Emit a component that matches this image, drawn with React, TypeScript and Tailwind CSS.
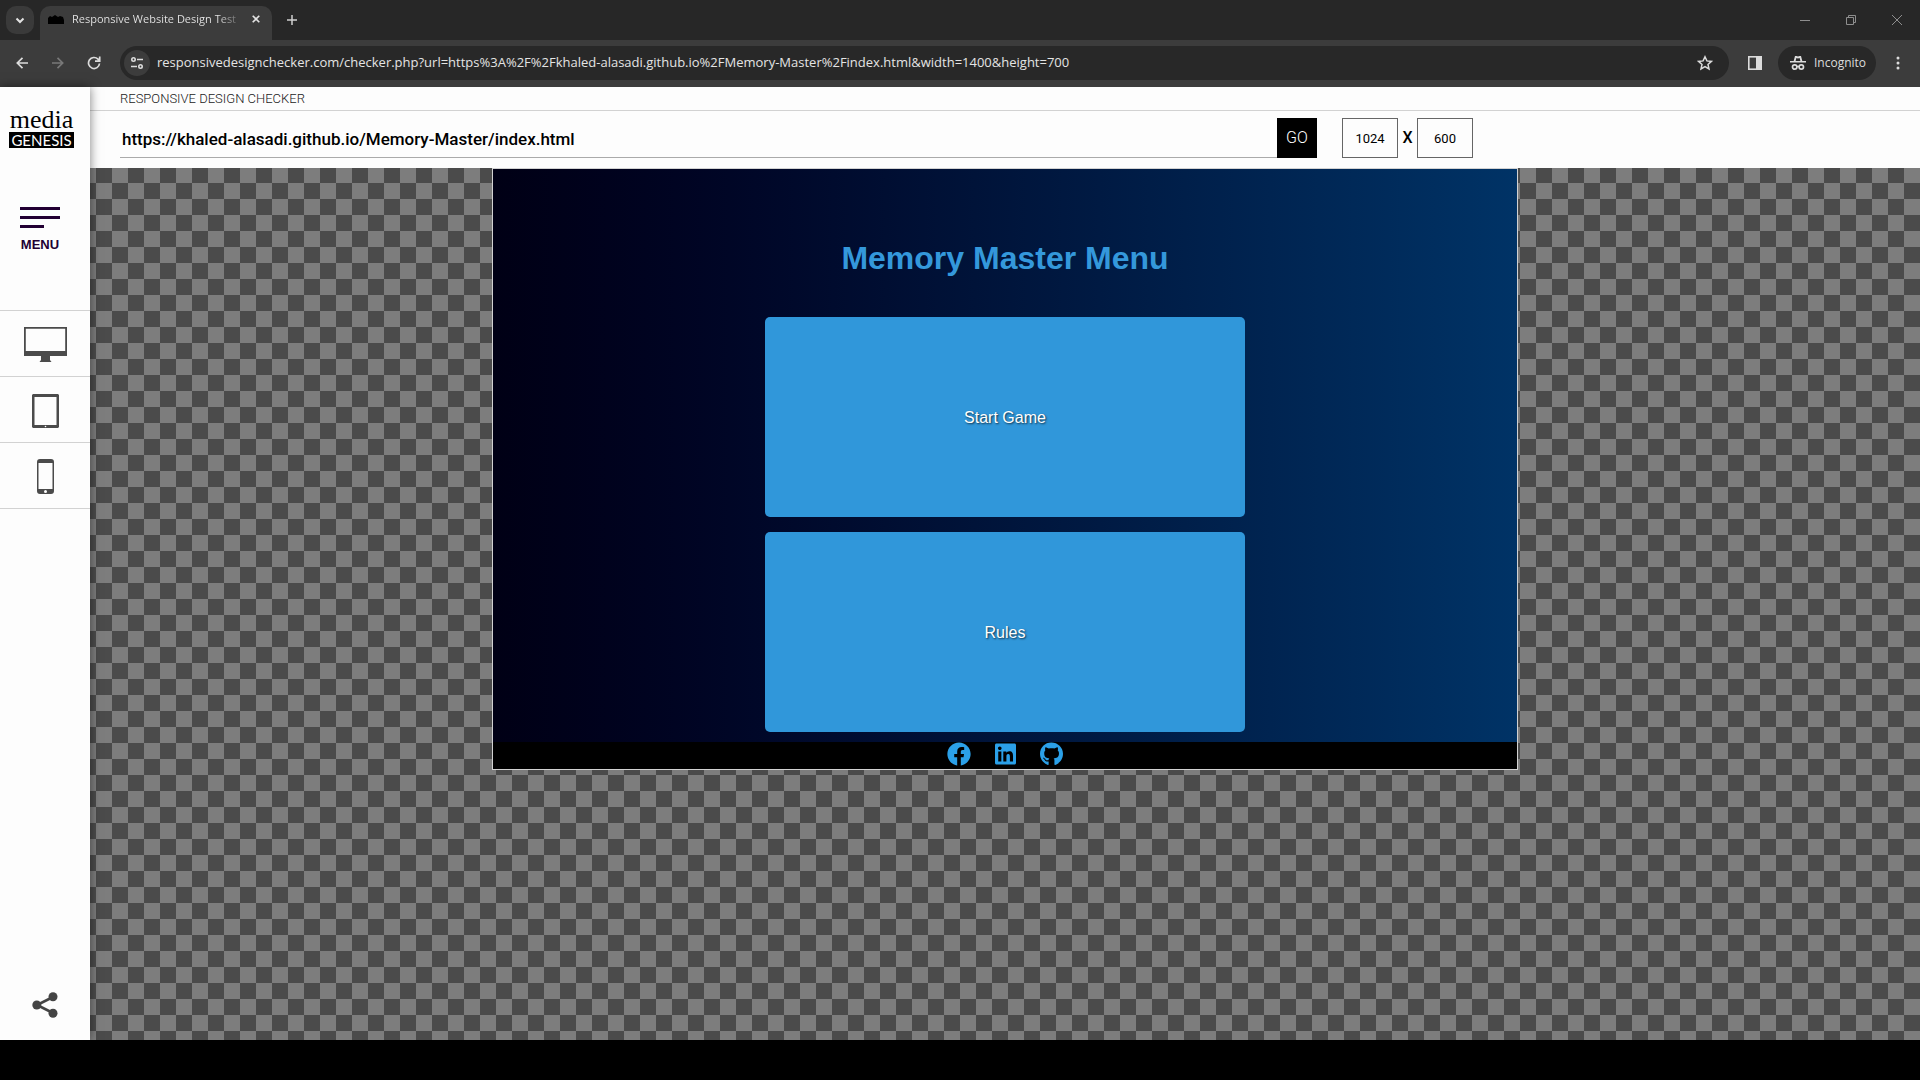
import React from "react";
import { FaFacebook, FaLinkedin, FaGithub } from "react-icons/fa";

const line = "fill-none stroke-current";

function TabStrip() {
  return (
    <div className="flex h-10 items-start bg-[#272727]">
      <button aria-label="Search tabs" className="mt-1.5 ml-1.5 flex h-7 w-7 items-center justify-center rounded-[10px] bg-[#3a3a3a] text-[#e3e3e3]">
        <svg className={line} width="10" height="7" viewBox="0 0 10 7" strokeWidth="2"><path d="M1.500 1.500 5 5l3.500-3.500" /></svg>
      </button>
      <div className="mt-1.5 ml-1.5 flex h-[34px] w-[232px] items-center rounded-t-[10px] bg-[#3c3c3c] pb-2 pl-2">
        <svg width="16" height="10" viewBox="0 0 16 10" className="shrink-0 fill-black"><path d="M0 4 2 2l2 1 3-2 3 2 2-1 3 1 1 3v4H0z" /></svg>
        <span className="ml-2 w-[172px] whitespace-nowrap bg-linear-to-r from-[#e8e8e8] from-85% to-[#3c3c3c] bg-clip-text text-[11px] text-transparent">Responsive Website Design Test</span>
        <button aria-label="Close tab" className="ml-2 text-[#e3e3e3]">
          <svg className={line} width="8" height="8" viewBox="0 0 8 8" strokeWidth="1.600"><path d="m.7.7 6.600 6.600M7.300.7.7 7.300" /></svg>
        </button>
      </div>
      <button aria-label="New tab" className="mt-[15px] ml-[15px] text-[#d0d0d0]">
        <svg className={line} width="10" height="10" viewBox="0 0 10 10" strokeWidth="1.500"><path d="M5 0v10M0 5h10" /></svg>
      </button>
      <div className="ml-auto flex items-center gap-9 pt-[15px] pr-[18px] text-[#8e8e8e]">
        <button aria-label="Minimize"><svg className={line} width="10" height="10" viewBox="0 0 10 10"><path d="M0 5.500h10" /></svg></button>
        <button aria-label="Restore"><svg className={line} width="10" height="10" viewBox="0 0 10 10"><path d="M.5 2.500h7v7h-7zM2.500 2.500v-2h7v7h-2" /></svg></button>
        <button aria-label="Close"><svg className={line} width="10" height="10" viewBox="0 0 10 10"><path d="m0 0 10 10M10 0 0 10" /></svg></button>
      </div>
    </div>
  );
}

function Toolbar() {
  return (
    <div className="flex h-[47px] items-center bg-[#3c3c3c] pb-0.5 text-[#dcdcdc]">
      <button aria-label="Back" className="ml-4"><svg className={line} width="12" height="12" viewBox="0 0 12 12" strokeWidth="1.700"><path d="M12 6H1.500M6.500.8 1.300 6l5.200 5.200" /></svg></button>
      <button aria-label="Forward" className="ml-6 text-[#787878]"><svg className={line} width="12" height="12" viewBox="0 0 12 12" strokeWidth="1.700"><path d="M0 6h10.500M5.500.8 10.700 6l-5.200 5.200" /></svg></button>
      <button aria-label="Reload" className="ml-[23px]"><svg className={line} width="14" height="14" viewBox="0 0 14 14" strokeWidth="1.700"><path d="M12.500 7.500A5.500 5.500 0 1 1 11 3.200l1.500 1.600M12.700.5v4.700H8" /></svg></button>
      <div className="ml-[19px] flex h-[34px] flex-1 items-center rounded-full bg-[#282828] pr-4 pl-1">
        <button aria-label="Site information" className="flex h-[26px] w-[26px] items-center justify-center rounded-full bg-[#3c3c3c]">
          <svg className={line} width="12" height="12" viewBox="0 0 12 12" strokeWidth="1.600"><circle cx="2.500" cy="2.500" r="1.700" /><path d="M6 2.500h6M0 9.500h6" /><circle cx="9.500" cy="9.500" r="1.700" /></svg>
        </button>
        <input aria-label="Address bar" readOnly className="ml-[7px] flex-1 bg-transparent font-['Open_Sans',sans-serif] text-[13px] text-[#e4e4e4] outline-none" value="responsivedesignchecker.com/checker.php?url=https%3A%2F%2Fkhaled-alasadi.github.io%2FMemory-Master%2Findex.html&width=1400&height=700" />
        <button aria-label="Bookmark"><svg className={line} width="16" height="16" viewBox="0 0 16 16" strokeWidth="1.500"><path d="m8 1.800 1.900 4.100 4.500.5-3.400 3 1 4.500L8 11.600l-4 2.300 1-4.500-3.400-3 4.500-.5z" /></svg></button>
      </div>
      <button aria-label="Side panel" className="ml-[19px]"><svg width="14" height="14" viewBox="0 0 14 14"><rect x=".8" y=".8" width="12.400" height="12.400" className={line} strokeWidth="1.600" /><path d="M8 0h6v14H8z" fill="currentColor" /></svg></button>
      <div className="ml-4 flex h-[34px] w-[98px] items-center rounded-full bg-[#282828] pl-3 font-['Open_Sans',sans-serif] text-xs">
        <svg width="16" height="16" viewBox="0 0 16 16" className="mr-2"><path d="M5 1h1.500L8 1.600 9.500 1H11l1.300 5H16v1.600H0V6h3.700zM5.600 6h4.800l-.8-3L8 3.500 6.400 3z" fill="currentColor" fillRule="evenodd" /><g className={line} strokeWidth="1.700"><circle cx="4.700" cy="12" r="2.200" /><circle cx="11.300" cy="12" r="2.200" /><path d="M7 11.500h2" /></g></svg>
        Incognito
      </div>
      <button aria-label="Browser menu" className="mr-5 ml-5"><svg width="4" height="14" viewBox="0 0 4 14" fill="currentColor"><circle cx="2" cy="2" r="1.500" /><circle cx="2" cy="7" r="1.500" /><circle cx="2" cy="12" r="1.500" /></svg></button>
    </div>
  );
}

function Sidebar() {
  const device = "flex h-[66px] items-center justify-center border-t border-[#d2d2d2] pt-0.5 text-[#4b4b4b]";
  return (
    <aside className="z-10 flex w-[90px] shrink-0 flex-col bg-[#fdfdfd] font-['Liberation_Sans',sans-serif] shadow-[0_0_10px_rgba(0,0,0,0.5)]">
      <a href="#home" className="mt-5 ml-[9px] flex w-[65px] flex-col items-center text-black">
        <span className="font-['Liberation_Serif',serif] text-[26px] leading-[25px]">media</span>
        <span className="flex h-4 w-full justify-center bg-black font-[Lato,sans-serif] text-[15px] leading-4 text-white">GENESIS</span>
      </a>
      <button className="mt-[59px] ml-5 flex w-10 flex-col text-[#220033]">
        <span className="h-[3px] w-10 bg-current" />
        <span className="mt-1.5 h-[3px] w-10 bg-current" />
        <span className="mt-1.5 h-[3px] w-6 bg-current" />
        <span className="mt-[9px] text-[13px] leading-4 font-bold">MENU</span>
      </button>
      <nav className="mt-[57px] border-b border-[#d2d2d2]">
        <a href="#desktop" aria-label="Desktop" className={device}><svg width="43" height="35" viewBox="0 0 43 35" fill="currentColor"><path fillRule="evenodd" d="M0 0h43v29H0zM1.800 1.800h39.400V24H1.800z" /><path d="M17 29h9v4l1.500 2h-12l1.500-2z" /></svg></a>
        <a href="#tablet" aria-label="Tablet" className={device}><svg width="27" height="34" viewBox="0 0 27 34"><path fill="currentColor" fillRule="evenodd" d="M1 0h25l1 1v32l-1 1H1l-1-1V1zM2.500 3h22v28h-22z" /><circle cx="13.500" cy="32.500" r=".8" fill="white" /></svg></a>
        <a href="#mobile" aria-label="Mobile" className={device}><svg width="17" height="35" viewBox="0 0 17 35"><path fill="currentColor" fillRule="evenodd" d="M3 0h11a3 3 0 0 1 3 3v29a3 3 0 0 1-3 3H3a3 3 0 0 1-3-3V3a3 3 0 0 1 3-3zM1.500 4h14v26h-14z" /><circle cx="8.500" cy="32.500" r="1.500" fill="white" /></svg></a>
      </nav>
      <button aria-label="Share" className="mt-auto mb-[22px] self-center text-[#444]">
        <svg width="26" height="26" viewBox="0 0 26 26" fill="currentColor"><path d="M21 5 5 13l16 8" className={line} strokeWidth="2.600" /><circle cx="4.800" cy="13" r="4.500" /><circle cx="21" cy="4.800" r="4.500" /><circle cx="21" cy="21.200" r="4.500" /></svg>
      </button>
    </aside>
  );
}

function CheckerBar() {
  const size = "h-10 w-14 border border-[#666] text-center text-[13px] text-black outline-none";
  return (
    <header className="bg-[#fdfdfd] font-[Roboto,sans-serif]">
      <h1 className="h-6 border-b border-[#d2d2d2] pl-[30px] text-[13px] leading-6 font-light text-[#222]">RESPONSIVE DESIGN CHECKER</h1>
      <form className="flex h-[57px] pt-[7px] pl-[30px]" onSubmit={(e) => e.preventDefault()}>
        <input aria-label="Website URL" readOnly value="https://khaled-alasadi.github.io/Memory-Master/index.html" className="h-10 w-full max-w-[1157px] border-b border-[#aaa] pt-0.5 pl-0.5 text-[17px] font-medium text-black outline-none" />
        <button className="h-10 w-10 shrink-0 bg-black text-base font-light text-white">GO</button>
        <div className="mr-[447px] ml-[25px] flex h-10 items-center">
          <input aria-label="Width" readOnly value="1024" className={size} />
          <span className="w-[19px] text-center text-base leading-5 font-medium">X</span>
          <input aria-label="Height" readOnly value="600" className={size} />
        </div>
      </form>
    </header>
  );
}

function GamePreview() {
  const card = "h-[200px] w-[480px] rounded-[5px] bg-[#3097da] pt-0.5 text-base text-white [text-shadow:1px_1px_2px_rgba(0,0,0,0.7)]";
  return (
    <section className="mx-auto w-[1026px] border border-[#d2d2d2] bg-linear-to-r from-[#000015] to-[#003366] font-['Liberation_Sans',sans-serif]">
      <div className="flex flex-col items-center gap-[15px] pt-[71px] pb-[10px]">
        <h2 className="mb-[26px] text-[32px] leading-9 font-bold text-[#3498db]">Memory Master Menu</h2>
        <button className={card}>Start Game</button>
        <button className={card}>Rules</button>
      </div>
      <footer className="flex h-[27px] justify-center gap-6 bg-black text-[#2ba0e8]">
        <a href="#facebook" aria-label="Facebook"><FaFacebook className="h-6 w-6" /></a>
        <a href="#linkedin" aria-label="LinkedIn"><FaLinkedin className="h-6 w-[21px]" /></a>
        <a href="#github" aria-label="GitHub"><FaGithub className="h-6 w-[23px]" /></a>
      </footer>
    </section>
  );
}

export default function App() {
  return (
    <div className="flex min-h-screen flex-col bg-black font-['Open_Sans',sans-serif]">
      <TabStrip />
      <Toolbar />
      <div className="mb-10 flex flex-1 bg-[repeating-conic-gradient(#7d7d7d_0_25%,#4b4b4b_0_50%)] bg-[length:32px_32px] bg-[position:16px_0]">
        <Sidebar />
        <main className="min-w-0 flex-1">
          <CheckerBar />
          <GamePreview />
        </main>
      </div>
    </div>
  );
}
